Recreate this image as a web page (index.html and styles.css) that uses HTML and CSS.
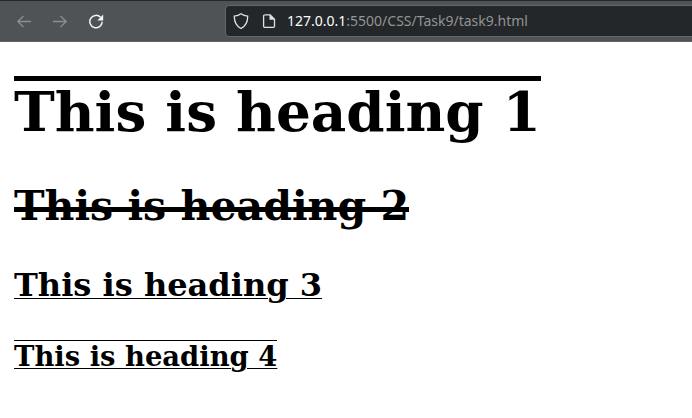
FILE: index.html
```html
<!DOCTYPE html>
<html lang="en">
<head>
<meta charset="utf-8">
<title>task9</title>
<link rel="stylesheet" href="styles.css">
</head>
<body>
<header class="toolbar">
  <nav class="nav">
    <svg class="dim" width="16" height="16" viewBox="0 0 16 16"><path d="M15 8.5H1.5M7.500 3l-5.700 5.500 5.700 5.500"/></svg>
    <svg class="dim" width="16" height="16" viewBox="0 0 16 16"><path d="M1 8.5h13.500M8.500 3l5.700 5.500-5.700 5.500"/></svg>
    <svg class="lit reload" width="16" height="16" viewBox="0 0 16 16"><path d="M12.500 4.300A6.200 6.200 0 1 0 14.200 8.800"/><path class="solid" d="M15.200 1.500v6H9.400z"/></svg>
  </nav>
  <div class="address">
    <svg class="lit" width="16" height="16" viewBox="0 0 16 16"><path d="M8 .8C6 2.200 4 2.900 1.300 3.200C1.200 9 3 13 8 15.500C13 13 14.800 9 14.700 3.200C12 2.900 10 2.200 8 .8z"/></svg>
    <svg class="lit" width="16" height="16" viewBox="0 0 16 16"><path d="M3.500 1.800H9.200L13.500 6.200V13.200Q13.500 14.300 12.400 14.300H3.600Q2.600 14.300 2.600 13.200V2.800Q2.600 1.800 3.600 1.800z"/><path class="solid" d="M8.500 1.500v5.300h5.300z"/></svg>
    <span class="url"><b>127.0.0.1</b>:5500/CSS/Task9/task9.html</span>
  </div>
</header>
<main class="page">
  <h1>This is heading 1</h1>
  <h2>This is heading 2</h2>
  <h3>This is heading 3</h3>
  <h4>This is heading 4</h4>
</main>
</body>
</html>
```
FILE: styles.css
```css
body {
  margin: 0;
  background: #fff;
  color: #000;
  overflow: hidden;
}
.toolbar {
  box-sizing: border-box;
  height: 42px;
  display: flex;
  align-items: flex-start;
  background: #4f5356;
  border-top: 1px solid #24282b;
  border-bottom: 1px solid #5f6366;
}
.nav {
  display: flex;
  gap: 20px;
  width: 209px;
  padding: 12px 0 0 16px;
}
svg {
  flex: none;
  fill: none;
  stroke-width: 1.3;
}
.dim { stroke: #8b8e90; }
.lit { stroke: #f4f5f5; }
.lit .solid { fill: #f4f5f5; stroke: none; }
.reload { stroke-width: 1.5; }
.address {
  box-sizing: border-box;
  flex: 1;
  height: 32px;
  margin: 4px -6px 0 0;
  padding-left: 7px;
  display: flex;
  align-items: center;
  gap: 12px;
  background: #232729;
  border: 1px solid #63676a;
  border-radius: 4px;
}
.address .lit { stroke: #dfe1e2; }
.address .solid { fill: #dfe1e2; }
.url {
  margin-left: -2px;
  font: 14px/20px "Noto Sans", sans-serif;
  color: #929495;
  white-space: nowrap;
}
.url b {
  font-weight: 400;
  color: #fcfcfc;
}
.page {
  padding: 38px 14px 0;
  font: 27.4px "DejaVu Serif", serif;
}
h1, h2, h3, h4 {
  position: relative;
  width: fit-content;
  margin: 0;
  font-weight: 700;
}
/* Overlines and strike lines */
h1::before, h2::before, h4::before {
  content: "";
  position: absolute;
  left: 0;
  right: 0;
  height: 5px;
  background: #000;
}
h1 {
  font-size: 2em;
  line-height: 64px;
  margin-bottom: 38px;
}
h1::before { top: -4px; }
h2 {
  font-size: 1.5em;
  line-height: 48px;
  margin-bottom: 36px;
}
h2::before { top: 25px; }
h3 {
  font-size: 1.17em;
  line-height: 38px;
  margin-bottom: 36px;
}
h4 {
  font-size: 1em;
  line-height: 32px;
}
h4::before { top: 0; height: 1px; }
h3, h4 {
  text-decoration: underline 1px;
  text-underline-offset: 2px;
}
```
